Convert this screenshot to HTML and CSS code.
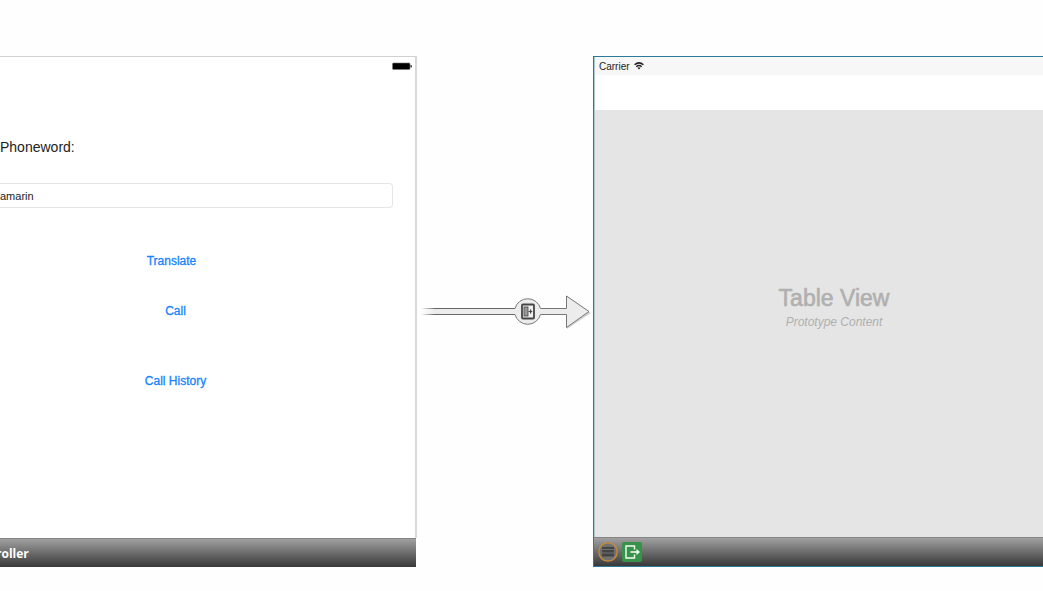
FILE: index.html
```html
<!DOCTYPE html>
<html lang="en">
<head>
<meta charset="utf-8">
<title>Storyboard</title>
<link rel="stylesheet" href="styles.css">
</head>
<body>
<main class="canvas">
  <section class="scene scene-phone">
    <div class="screen">
      <div class="status status-right">
        <svg width="20" height="9" viewBox="0 0 20 9" aria-label="Battery"><rect x=".5" y="1" width="17.5" height="6.500" rx="1" fill="#000" stroke="#777" stroke-width=".6"/><path d="M18.500 2.700v3q1.500-.4 1.500-1.500T18.500 2.700z" fill="#333"/></svg>
      </div>
      <label class="field-label" for="phoneword">Phoneword:</label>
      <input class="field" id="phoneword" type="text" value="amarin">
      <div class="actions">
        <button class="action action-first" type="button">Translate</button>
        <button class="action" type="button">Call</button>
        <button class="action action-last" type="button">Call History</button>
      </div>
    </div>
    <footer class="dock"><span class="dock-title">roller</span></footer>
  </section>
  <div class="segue">
    <svg width="176" height="40" viewBox="0 0 176 40" aria-label="Segue">
      <defs>
        <linearGradient id="line" gradientUnits="userSpaceOnUse" x1="4" y1="0" x2="18" y2="0"><stop offset="0" stop-color="#666" stop-opacity="0"/><stop offset="1" stop-color="#666"/></linearGradient>
        <linearGradient id="body" gradientUnits="userSpaceOnUse" x1="4" y1="0" x2="18" y2="0"><stop offset="0" stop-color="#ececec" stop-opacity="0"/><stop offset="1" stop-color="#ececec"/></linearGradient>
      </defs>
      <path d="M4 17H98V23H4z" fill="url(#body)"/>
      <path d="M4 16h94v1H4zM4 22h94v1H4z" fill="url(#line)"/>
      <path d="M150 5L174 21 150 37z" fill="#aaa" opacity=".5"/>
      <path d="M98 16.500A13.200 13.200 0 0 1 123.500 16.500H149.500V4L172 19.500 149.500 35.500V22.500H123.500A13.200 13.200 0 0 1 98 22.500" fill="#ececec" stroke="#777"/>
      <rect x="105" y="12.500" width="12" height="14" rx="1" fill="#eee" stroke="#444" stroke-width="1.800"/>
      <rect x="107" y="15" width="4" height="9" fill="#999" stroke="#444" stroke-width=".8"/>
      <path d="M111.500 19.500H115M113.500 17.500v4" fill="none" stroke="#444"/>
      <path d="M113 17.500l2.500 2-2.500 2z" fill="#444"/>
    </svg>
  </div>
  <section class="scene scene-table">
    <div class="screen">
      <div class="status status-left">
        <span>Carrier</span>
        <svg width="10" height="8" viewBox="0 0 10 8" aria-label="Wi-Fi"><path d="M.6 2.800Q5-1 9.400 2.800M2.300 4.700Q5 2.400 7.700 4.700" fill="none" stroke="#222" stroke-width="1.500"/><path d="M3.400 5.800Q5 4.600 6.600 5.800L5 7.600z" fill="#222"/></svg>
      </div>
      <div class="navbar"></div>
      <div class="table">
        <h1 class="table-title">Table View</h1>
        <p class="table-note">Prototype Content</p>
      </div>
    </div>
    <footer class="dock">
      <svg width="20" height="20" viewBox="0 0 20 20" aria-label="Table view controller"><circle cx="10" cy="10" r="9.200" fill="#707070" stroke="#c98936" stroke-width="1.300"/><path d="M4 5h12v2H4zM4 8h12v2.500H4zM4 11.500h12v3H4z" fill="#444"/></svg>
      <svg width="20" height="20" viewBox="0 0 20 20" aria-label="Exit"><rect width="20" height="20" rx="2" fill="#38924a"/><path d="M12.500 7.500V4H4V16H12.500V12.500M8.500 10H16" fill="none" stroke="#f4fff4" stroke-width="1.400"/><path d="M14.500 7L18 10 14.500 13z" fill="#f4fff4"/></svg>
    </footer>
  </section>
</main>
</body>
</html>
```
FILE: styles.css
```css
* {
  box-sizing: border-box;
}

body {
  margin: 0;
  background: #fefefe;
  color: #222;
  font-family: "Liberation Sans", Arial, sans-serif;
}

.canvas {
  display: grid;
  grid-template-columns: 417fr 176fr 450fr;
  min-height: 100vh;
  padding: 56px 0 24px;
  overflow: hidden;
}

.scene {
  display: flex;
  flex-direction: column;
}

.screen {
  display: flex;
  flex: 1;
  flex-direction: column;
  background: #fff;
}

.scene-phone .screen {
  padding-right: 22px;
  border-top: 1px solid #d0d0d0;
  border-right: 2px solid #d8d8db;
}

.status {
  display: flex;
  align-items: center;
  height: 18px;
  font-size: 10px;
}

.status-right {
  justify-content: flex-end;
  margin-right: -19px;
}

.status-left {
  gap: 4px;
  padding-left: 4px;
  background: #f7f7f7;
}

.field-label {
  margin-top: 64px;
  font-size: 14px;
  line-height: 16px;
}

.field {
  width: 100%;
  height: 25px;
  margin-top: 28px;
  padding: 0;
  border: 1px solid #e6e6e6;
  border-left: 0;
  border-radius: 0 4px 4px 0;
  background: #fff;
  color: #222;
  font: 11px "Liberation Sans", Arial, sans-serif;
}

.actions {
  display: flex;
  flex-direction: column;
  align-items: center;
  gap: 34px;
  padding: 45px 42px 0 0;
}

.action {
  padding: 0;
  border: 0;
  background: none;
  color: #1583ff;
  font: 12px/16px "Liberation Sans", Arial, sans-serif;
  -webkit-text-stroke: 0.3px #1583ff;
}

.action-first {
  padding-right: 8px;
}

.action-last {
  margin-top: 20px;
}

.dock {
  display: flex;
  align-items: center;
  gap: 4px;
  height: 29px;
  border-top: 1px solid #858585;
  background: linear-gradient(#a0a0a0, #383838);
}

.scene-phone .dock {
  margin-right: 1px;
}

.dock-title {
  margin-left: -4px;
  color: #fff;
  font: bold 12px "Open Sans", sans-serif;
}

.segue {
  display: flex;
  align-items: center;
  justify-content: center;
}

.scene-table {
  border: 1px solid #2b7b98;
  border-right: 0;
}

.scene-table .screen {
  border-left: 1px solid #a9cad6;
}

.scene-table .dock {
  padding-left: 4px;
}

.navbar {
  height: 35px;
}

.table {
  display: flex;
  flex: 1;
  flex-direction: column;
  align-items: center;
  justify-content: center;
  margin-right: -30px;
  padding-bottom: 34px;
  background: #e5e5e5;
  color: #b0b0b0;
}

.table-title {
  margin: 0;
  font-size: 23px;
  font-weight: 400;
  line-height: 26px;
  -webkit-text-stroke: 0.6px #b0b0b0;
}

.table-note {
  margin: 4px 0 0;
  font-size: 12px;
  font-style: italic;
  line-height: 14px;
}
```
